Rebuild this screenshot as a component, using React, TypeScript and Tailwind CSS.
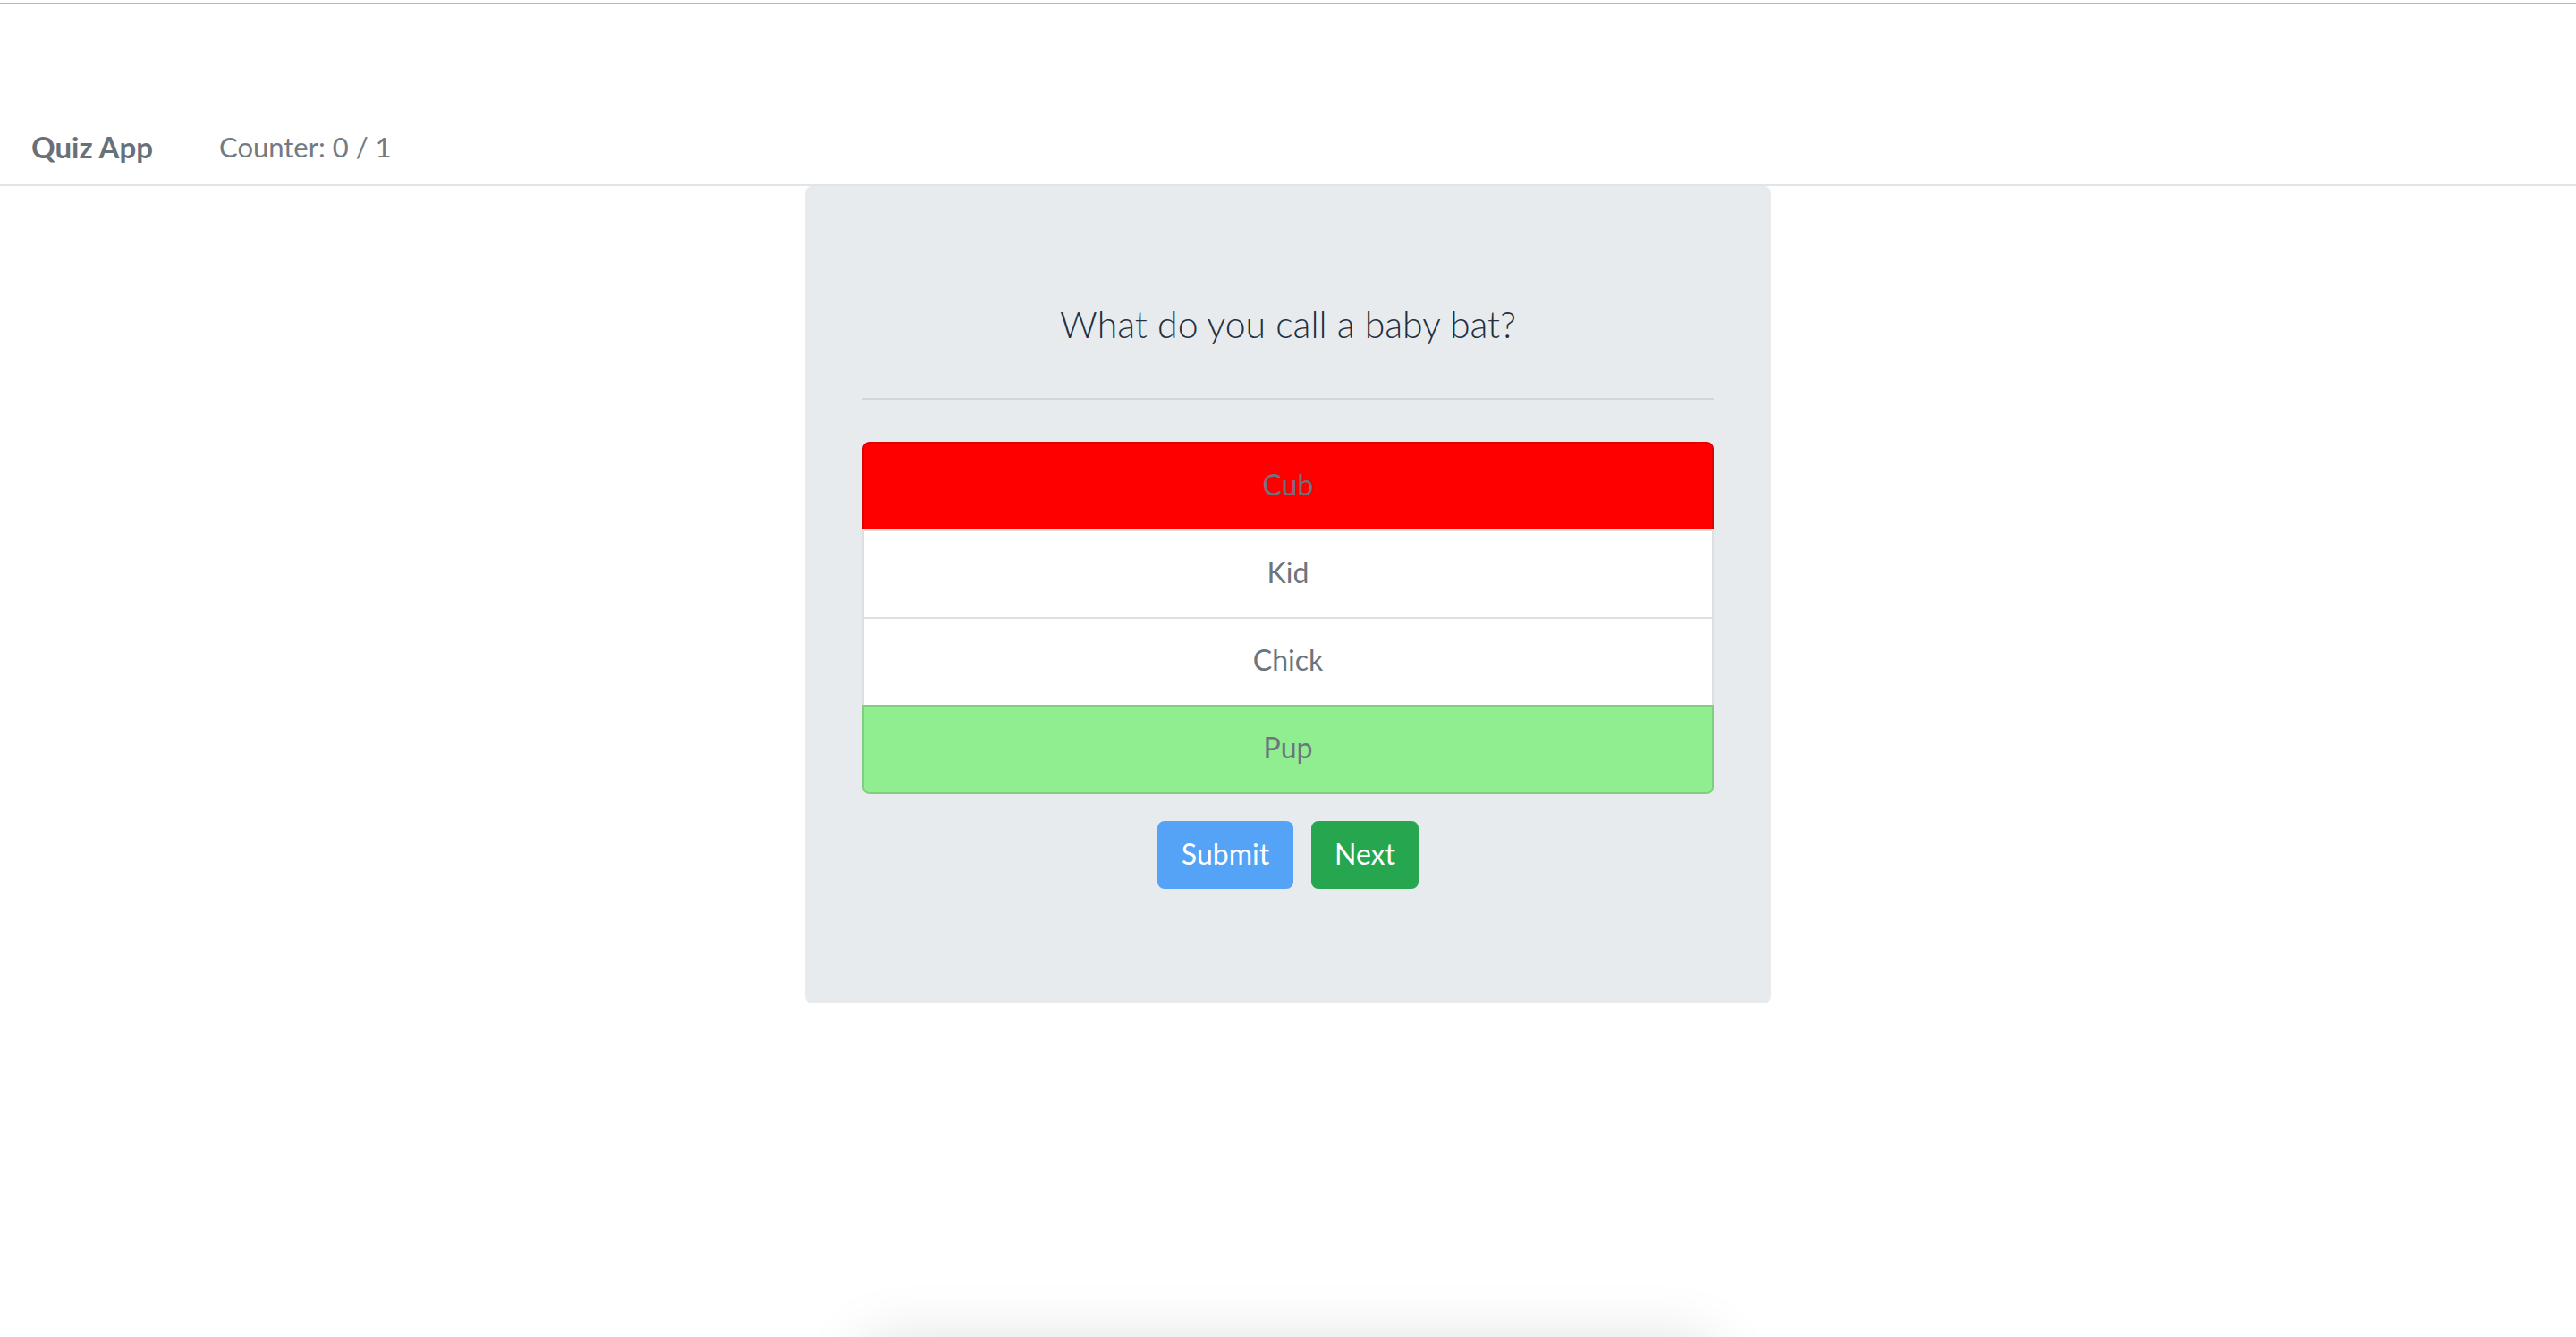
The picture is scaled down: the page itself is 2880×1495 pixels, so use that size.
import { useState } from 'react';

const ANSWERS = ['Cub', 'Kid', 'Chick', 'Pup'];
const CORRECT = 'Pup';

function Header({ counter, total }: { counter: number; total: number }) {
  return (
    <div className="pt-[3px]">
      <header className="flex h-[205px] items-end border-t-2 border-b-2 border-t-[#b8b8b8] border-b-[#e1e4e8] px-[35px] pb-[20px]">
        <div className="w-[210px] text-[33px] leading-[44px] font-bold text-[#687078]">Quiz App</div>
        <div className="text-[31px] leading-[44px] font-normal text-[#737b82]">
          Counter: {counter} / {total}
        </div>
      </header>
    </div>
  );
}

function AnswerItem({ label, tone, first, last }: { label: string; tone: 'wrong' | 'right' | 'plain'; first: boolean; last: boolean }) {
  return (
    <li
      className={[
        'border-2 border-black/[0.125] pt-[22px] pb-[26px] text-center text-[32px] leading-[48px] font-normal text-[#6c757d]',
        last ? '' : '-mb-[2px]',
        first ? 'rounded-t-[8px]' : '',
        last ? 'rounded-b-[8px]' : '',
        tone === 'wrong' ? 'bg-[#ff0000]' : tone === 'right' ? 'bg-[#90ee90]' : 'bg-white',
      ].join(' ')}
    >
      {label}
    </li>
  );
}

export default function App() {
  const [selected] = useState('Cub');

  return (
    <div className="min-h-screen bg-white font-['Lato',sans-serif]">
      <Header counter={0} total={1} />

      <main className="flex flex-col items-center">
        <div className="w-[1080px] rounded-[8px] bg-[#e8ebee] px-[64px] pt-[131px] pb-[128px]">
          <h2 className="text-center text-[41px] leading-[48px] font-light text-[#1f3042]">
            What do you call a baby bat?
          </h2>
          <hr className="mt-[58px] border-t-2 border-[#d1d5d9]" />

          <ul className="mt-[47px] flex flex-col">
            {ANSWERS.map((a, i) => (
              <AnswerItem
                key={a}
                label={a}
                first={i === 0}
                last={i === ANSWERS.length - 1}
                tone={a === CORRECT ? 'right' : a === selected ? 'wrong' : 'plain'}
              />
            ))}
          </ul>

          <div className="mt-[30px] flex justify-center gap-[20px]">
            <button className="h-[76px] w-[152px] rounded-[8px] border-2 border-[#54a3f7] bg-[#54a3f7] pb-[3px] text-[32px] leading-[48px] font-normal text-white">
              Submit
            </button>
            <button className="h-[76px] w-[120px] rounded-[8px] border-2 border-[#26a74f] bg-[#26a74f] pb-[3px] text-[32px] leading-[48px] font-normal text-white">
              Next
            </button>
          </div>
        </div>

        {/* next card sits below the fold, only its shadow shows */}
        <div className="mt-[385px] h-[300px] w-[940px] bg-white shadow-[0_0_70px_rgba(0,0,0,0.16)]" />
      </main>
    </div>
  );
}
